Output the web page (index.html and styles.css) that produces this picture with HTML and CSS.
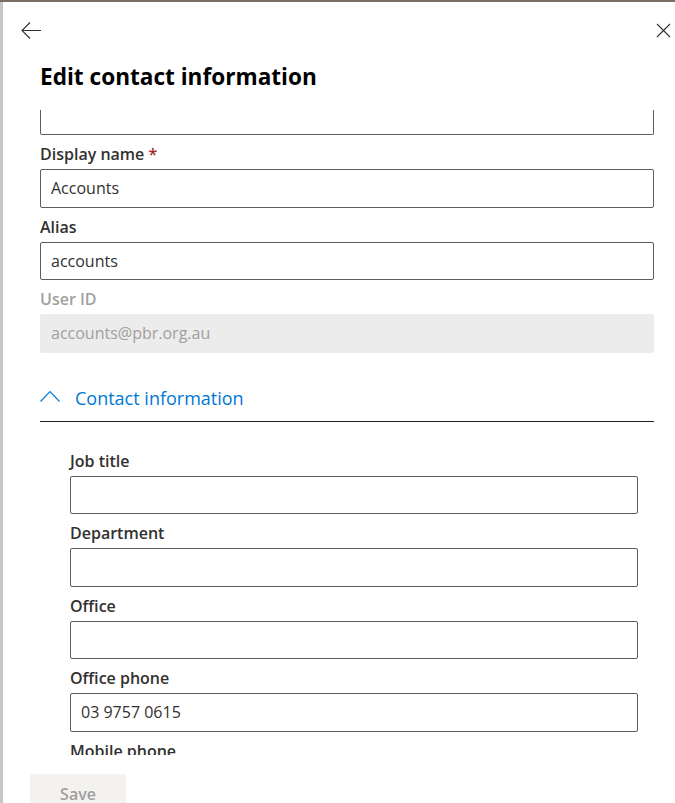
FILE: index.html
```html
<!DOCTYPE html>
<html lang="en">
<head>
<meta charset="utf-8">
<title>Edit contact information</title>
<link rel="stylesheet" href="styles.css">
</head>
<body>
<div class="topbar"></div>
<div class="panel">
  <div class="header">
    <button class="icon-btn" aria-label="Back">
      <svg width="20" height="17" viewBox="0 0 20 17"><path d="M1 8.5H20M9 0.5L1 8.5L9 16.5" fill="none" stroke="#323130" stroke-width="1.1"/></svg>
    </button>
    <button class="icon-btn" aria-label="Close">
      <svg width="15" height="15" viewBox="0 0 15 15"><path d="M1 1L14 14M14 1L1 14" fill="none" stroke="#323130" stroke-width="1.1"/></svg>
    </button>
  </div>
  <h1 class="title">Edit contact information</h1>
  <div class="scroll">
    <div class="input input-clipped"></div>
    <label class="label">Display name <span class="req">*</span></label>
    <div class="input">Accounts</div>
    <label class="label">Alias</label>
    <div class="input">accounts</div>
    <label class="label label-disabled">User ID</label>
    <div class="input input-disabled">accounts@pbr.org.au</div>

    <div class="section-head">
      <svg class="chev" width="20" height="12" viewBox="0 0 20 12"><path d="M0.5 11.5L10 1.5L19.5 11.5" fill="none" stroke="#0078d4" stroke-width="1.1"/></svg>
      <span class="section-title">Contact information</span>
    </div>
    <div class="section-body">
      <label class="label">Job title</label>
      <div class="input"></div>
      <label class="label">Department</label>
      <div class="input"></div>
      <label class="label">Office</label>
      <div class="input"></div>
      <label class="label">Office phone</label>
      <div class="input">03 9757 0615</div>
      <label class="label">Mobile phone</label>
      <div class="input"></div>
    </div>
  </div>
  <div class="footer">
    <button class="save" disabled>Save</button>
  </div>
</div>
</body>
</html>
```

FILE: styles.css
```css
* { box-sizing: border-box; }
html, body { margin: 0; padding: 0; }
body {
  background: #ffffff;
  font-family: "Open Sans", "Noto Sans", sans-serif;
  color: #323130;
  width: 675px;
  height: 803px;
  overflow: hidden;
}
.topbar {
  height: 2px;
  background: #7a6e65;
}
.panel {
  height: 801px;
  border-left: 3px solid #c6c6c6;
  display: flex;
  flex-direction: column;
  overflow: hidden;
}
.header {
  height: 56px;
  flex: none;
  display: flex;
  align-items: center;
  justify-content: space-between;
  padding: 0 4px 0 18px;
}
.icon-btn {
  border: 0;
  background: transparent;
  padding: 0;
  display: flex;
  align-items: center;
  justify-content: center;
}
.title {
  margin: 4px 0 0 0;
  padding-left: 37px;
  font-size: 22.6px;
  line-height: 30px;
  font-weight: 700;
  color: #000000;
  flex: none;
}
.scroll {
  margin-top: 18px;
  height: 645px;
  flex: none;
  overflow: hidden;
  padding: 0 21px 0 37px;
}
.label {
  display: block;
  padding: 8px 0 4px;
  font-size: 16px;
  line-height: 22px;
  font-weight: 600;
  color: #323130;
}
.req { color: #a4262c; }
.label-disabled { color: #a19f9d; }
.input {
  height: 38.5px;
  border: 1px solid #605e5c;
  border-radius: 2px;
  padding: 0 10px;
  font-size: 16px;
  line-height: 37px;
  color: #323130;
  background: #ffffff;
}
.input-clipped {
  height: 25px;
  border-top: 0;
  border-radius: 0 0 2px 2px;
}
.input-disabled {
  border-color: transparent;
  background: #ececec;
  color: #a19f9d;
}
.section-head {
  margin-top: 22px;
  height: 47px;
  border-bottom: 1px solid #201f1e;
  display: flex;
  align-items: center;
  gap: 15px;
}
.chev { flex: none; margin-top: -3px; }
.section-title {
  font-size: 18px;
  line-height: 24px;
  color: #0078d4;
}
.section-body {
  padding: 20px 16px 0 30px;
}
.footer {
  flex: none;
  padding: 19px 0 0 27px;
}
.save {
  width: 96px;
  height: 40px;
  border: 0;
  border-radius: 2px;
  background: #f3f2f1;
  color: #a19f9d;
  font-family: "Open Sans", "Noto Sans", sans-serif;
  font-size: 16px;
  font-weight: 600;
  padding: 0;
}
```
